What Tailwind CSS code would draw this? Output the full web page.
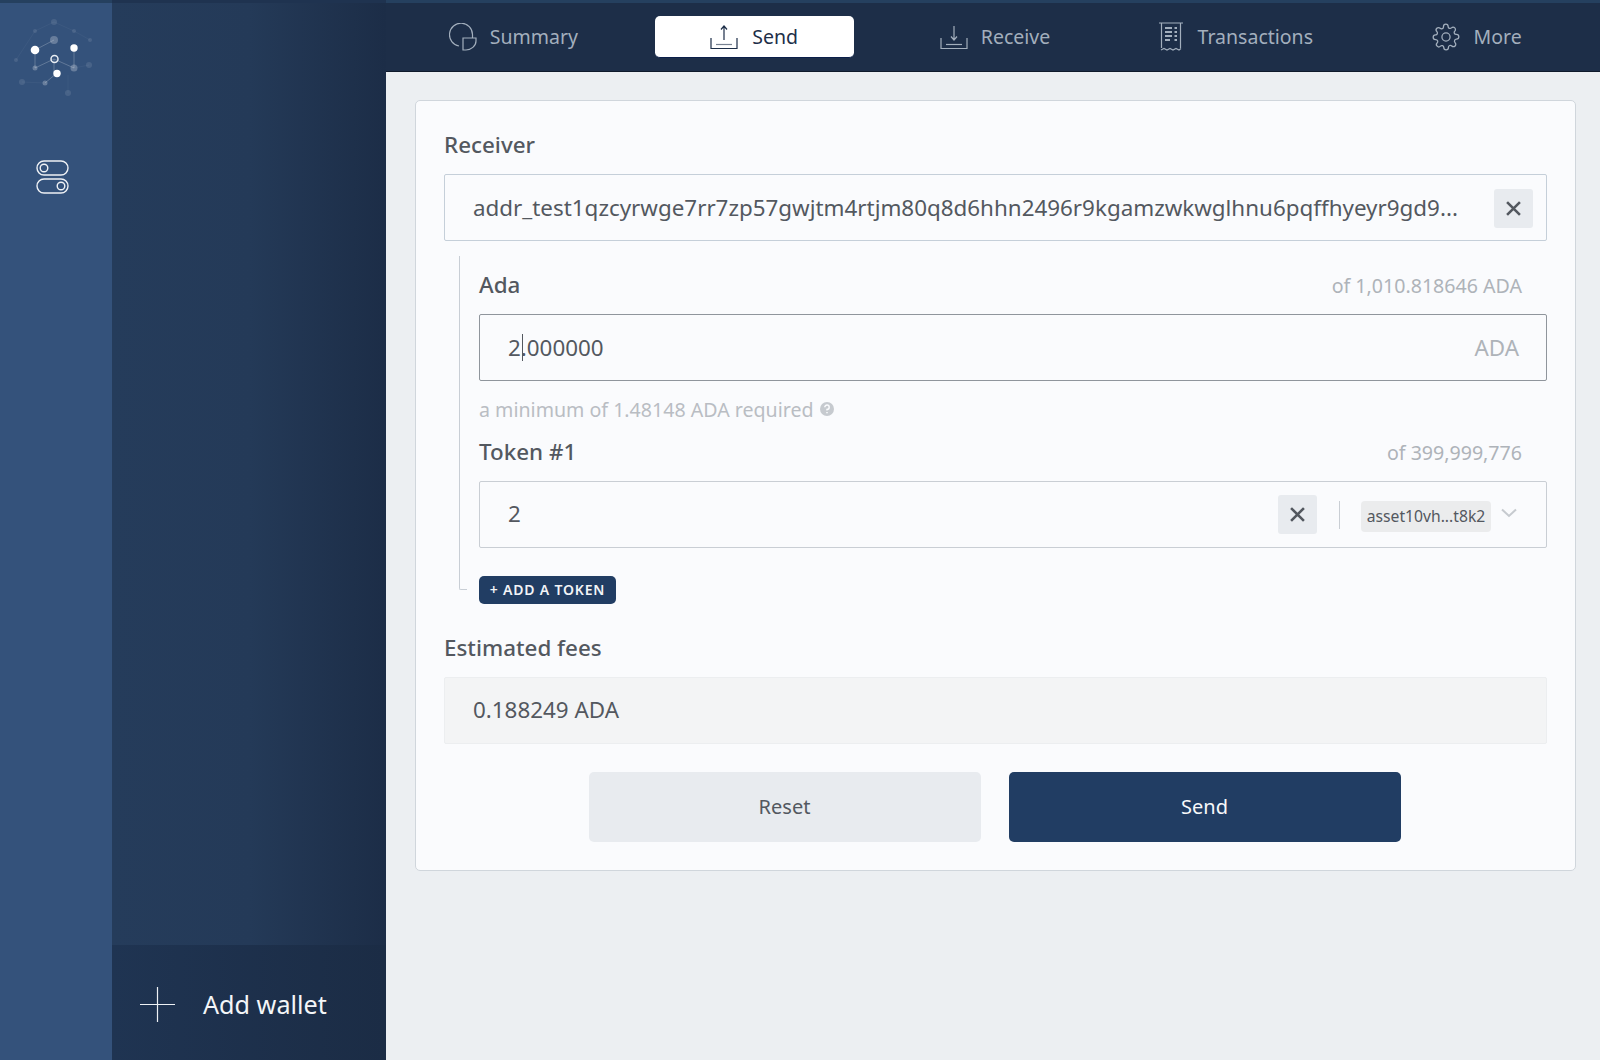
<!DOCTYPE html>
<html lang="en">
<head>
    <meta charset="UTF-8">
    <meta name="viewport" content="width=device-width, initial-scale=1.0">
    <title>Send</title>
    <script src="https://cdn.jsdelivr.net/npm/@tailwindcss/browser@4"></script>
</head>
<body class="h-[1060px] w-[1600px] overflow-hidden bg-[#eceff2] font-['Noto_Sans',sans-serif] text-[#53585f]">
<div class="flex h-full">
    <!-- icon rail -->
    <aside class="flex w-[112px] shrink-0 flex-col items-center border-t-[3px] border-[#25405f] bg-[#34527b]">
        <svg width="112" height="100" viewBox="0 3 112 100">
            <g stroke="#fff" stroke-opacity=".22" fill="none">
                <path d="M35 50L54 40M35 50V68L54 59M74 48V68L54 59M54 59V73M57 73L45 83"/>
                <path stroke-opacity=".04" d="M35 31L54 22L74 31L90 40M22 82L45 83M16 60L35 31M89 65L74 68M68 93V75"/>
            </g>
            <g fill="#fff" fill-opacity=".25">
                <circle cx="54" cy="40" r="4"/><circle cx="35" cy="68" r="2.500"/><circle cx="74" cy="68" r="3.500"/><circle cx="45" cy="83" r="2.500"/>
            </g>
            <g fill="#fff" fill-opacity=".1">
                <circle cx="22" cy="82" r="3"/><circle cx="68" cy="93" r="3"/><circle cx="16" cy="60" r="2"/><circle cx="89" cy="65" r="3"/><circle cx="90" cy="40" r="2"/><circle cx="74" cy="31" r="2"/><circle cx="35" cy="31" r="2"/><circle cx="54" cy="22" r="3"/>
            </g>
            <circle cx="35" cy="50" r="4.300" fill="#fff"/><circle cx="74" cy="48" r="3.700" fill="#fff"/><circle cx="57" cy="73.500" r="3.700" fill="#fff"/>
            <circle cx="54.500" cy="59" r="3.500" fill="none" stroke="#e8edf3" stroke-width="1.500"/>
        </svg>
        <svg class="mt-[57px] -ml-[6px]" width="34" height="34" viewBox="0 0 34 34" fill="none" stroke="#eef1f5" stroke-width="1.400">
            <rect x="1" y="1" width="31" height="14" rx="7"/><circle cx="8" cy="8" r="3.800"/>
            <rect x="1" y="19" width="31" height="14" rx="7"/><circle cx="25" cy="26" r="3.800"/>
        </svg>
    </aside>

    <!-- wallet list -->
    <aside class="flex w-[274px] shrink-0 flex-col justify-end border-t-[3px] border-[#1f3350] bg-gradient-to-r from-[#253c5b] via-[#243a58] to-[#1c2d47]">
        <div class="flex h-[115px] items-center gap-[28px] bg-gradient-to-r from-[#1f3452] to-[#1b2c45] pl-[28px] pt-[4px] text-[25.200px] text-[#f4f6f8]">
            <svg width="35" height="35" viewBox="0 0 35 35" stroke="#eef1f5" stroke-width="1.200"><path d="M0 17.500H35M17.500 0V35"/></svg>
            <span class="leading-none">Add wallet</span>
        </div>
    </aside>

    <!-- main -->
    <main class="flex min-w-0 flex-1 flex-col">
        <nav class="grid h-[72px] shrink-0 grid-cols-5 items-center border-t-[3px] border-b border-t-[#25405f] border-b-[#0f1a2b] bg-[#1d2e48] pl-[7px] pr-[3px] text-[19.500px] text-[#a3afbd]">
            <a class="flex items-center justify-center gap-[13px]">
                <svg width="28" height="28" viewBox="0 0 28 28" fill="none" stroke="currentColor" stroke-width="1.200"><path d="M10 23A11.500 11.500 0 1 1 23.500 11.500V15"/><path d="M14 15H27V18C27 23 22 27 17 27H14Z"/></svg>
                <span>Summary</span>
            </a>
            <div class="px-[21px]">
                <a class="flex h-[42px] items-center justify-center gap-[14px] rounded-[5px] border-b border-[#0b1f4a] bg-white text-[#1d2e48]">
                    <svg width="28" height="26" viewBox="0 0 28 26" fill="none" stroke="currentColor" stroke-width="1.200"><path d="M14 2V16M11 5.500L14 2L17 5.500"/><path d="M1 14V24.500H27V14"/><path d="M6 20.500H22" stroke-opacity=".6"/></svg>
                    <span>Send</span>
                </a>
            </div>
            <a class="flex items-center justify-center gap-[13px]">
                <svg width="28" height="26" viewBox="0 0 28 26" fill="none" stroke="currentColor" stroke-width="1.200"><path d="M14 2V16M11 12.500L14 16L17 12.500"/><path d="M1 14V24.500H27V14"/><path d="M6 20.500H22"/></svg>
                <span>Receive</span>
            </a>
            <a class="flex items-center justify-center gap-[15px]">
                <svg width="24" height="30" viewBox="0 0 24 30" fill="none" stroke="currentColor" stroke-width="1.200"><path d="M0 1H24M2.500 1V26M21.500 1V26M2 28L5 26.500L8 28L11 26.500L14 28L17 26.500L20 28L22 26.500"/><path stroke-width="2" d="M6 6H13M15.500 6H18M6 10H13M15.500 10H18M6 14H13M15.500 14H18M6 18H11M15.500 18H18"/></svg>
                <span>Transactions</span>
            </a>
            <a class="flex items-center justify-center gap-[14px]">
                <svg width="28" height="28" viewBox="0 0 24 24" fill="none" stroke="currentColor" stroke-width="1.100"><circle cx="12" cy="12" r="3.500"/><path d="M19.400 15a1.650 1.650 0 0 0 .330 1.820l.060.060a2 2 0 1 1-2.830 2.830l-.060-.060a1.650 1.650 0 0 0-2.800 1.170V21a2 2 0 0 1-4 0v-.090a1.650 1.650 0 0 0-2.800-1.110l-.060.060a2 2 0 1 1-2.830-2.830l.060-.060a1.650 1.650 0 0 0-1.170-2.800H3a2 2 0 0 1 0-4h.090a1.650 1.650 0 0 0 1.110-2.800l-.060-.060a2 2 0 1 1 2.830-2.830l.060.060a1.650 1.650 0 0 0 2.800-1.170V3a2 2 0 0 1 4 0v.090a1.650 1.650 0 0 0 2.800 1.110l.060-.060a2 2 0 1 1 2.830 2.830l-.060.060a1.650 1.650 0 0 0 1.170 2.800H21a2 2 0 0 1 0 4h-.090a1.650 1.650 0 0 0-1.510 1z"/></svg>
                <span>More</span>
            </a>
        </nav>

        <div class="px-[29px] pt-[28px] pr-[24px]">
            <section class="h-[771px] rounded-[5px] border border-[#d0d6dc] bg-[#fafbfd] px-[28px] pt-[29px]">
                <label class="block text-[22.400px] font-medium leading-[30px]">Receiver</label>
                <div class="mt-[14px] flex h-[67px] items-center justify-between rounded-[2px] border border-[#c5cfd9] pl-[28px] pr-[13px] text-[22.400px]">
                    <span>addr_test1qzcyrwge7rr7zp57gwjtm4rtjm80q8d6hhn2496r9kgamzwkwglhnu6pqffhyeyr9gd9...</span>
                    <span class="mt-[2px] flex size-[39px] items-center justify-center rounded-[3px] bg-[#e8ebef]">
                        <svg width="15" height="15" viewBox="0 0 14 14" stroke="#53585f" stroke-width="2.400"><path d="M1 1L13 13M13 1L1 13"/></svg>
                    </span>
                </div>

                <!-- outputs, with the bracket line on the left -->
                <div class="relative mt-[15px] pl-[35px]">
                    <div class="absolute left-[15px] top-0 h-[334px] w-[8px] rounded-bl-[2px] border-l border-b border-[#c8ced5]"></div>
                    <div class="flex items-baseline justify-between pr-[25px] pt-[14px]">
                        <span class="text-[22.400px] font-medium leading-[30px]">Ada</span>
                        <span class="text-[19.600px] text-[#aeb3b9]">of 1,010.818646 ADA</span>
                    </div>
                    <div class="relative mt-[14px] flex h-[67px] items-center justify-between rounded-[2px] border border-[#8f959c] pl-[28px] pr-[27px] text-[22.400px]">
                        <span>2.000000</span>
                        <span class="absolute left-[42px] top-[19px] h-[27px] w-px bg-[#53585f]"></span>
                        <span class="text-[#aeb3b9]">ADA</span>
                    </div>
                    <div class="mt-[14px] flex h-[28px] items-center gap-[6px] text-[19.600px] text-[#b9bdc3]">
                        <span>a minimum of 1.48148 ADA required</span>
                        <svg width="14" height="14" viewBox="0 0 14 14"><circle cx="7" cy="7" r="7" fill="#c6cacf"/><path d="M4.800 5.300A2.200 2.200 0 1 1 7 7.500V8.500M7 10V11.200" fill="none" stroke="#fafbfd" stroke-width="1.500"/></svg>
                    </div>
                    <div class="mt-[14px] flex items-baseline justify-between pr-[25px]">
                        <span class="text-[22.400px] font-medium leading-[30px]">Token #1</span>
                        <span class="text-[19.600px] text-[#aeb3b9]">of 399,999,776</span>
                    </div>
                    <div class="mt-[13px] flex h-[67px] items-center rounded-[2px] border border-[#c9ced4] pl-[28px] pr-[29px] text-[22.400px]">
                        <span class="flex-1">2</span>
                        <span class="flex size-[39px] items-center justify-center rounded-[3px] bg-[#e8ebef]">
                            <svg width="15" height="15" viewBox="0 0 14 14" stroke="#53585f" stroke-width="2.400"><path d="M1 1L13 13M13 1L1 13"/></svg>
                        </span>
                        <span class="ml-[22px] mt-[2px] h-[28px] w-px bg-[#c9ced4]"></span>
                        <span class="ml-[21px] mt-[4px] flex h-[31px] w-[130px] items-center justify-center rounded-[4px] bg-[#ebeced] text-[15.700px]">asset10vh...t8k2</span>
                        <svg class="ml-[10px] -mt-[3px]" width="16" height="10" viewBox="0 0 16 10" fill="none" stroke="#c6cacf" stroke-width="2"><path d="M1 1.500L8 8L15 1.500"/></svg>
                    </div>
                    <button class="mt-[28px] block h-[28px] w-[137px] rounded-[5px] bg-[#213d63] text-[14px] font-semibold tracking-[.8px] text-[#f2f4f7]">+ ADD A TOKEN</button>
                </div>

                <label class="mt-[29px] block text-[22.400px] font-medium leading-[30px]">Estimated fees</label>
                <div class="mt-[14px] flex h-[67px] items-center rounded-[2px] border border-[#eceef0] bg-[#f3f4f5] pl-[28px] text-[22.400px]">0.188249 ADA</div>

                <div class="mt-[28px] flex justify-center gap-[28px] pr-[2px]">
                    <button class="h-[70px] w-[392px] rounded-[5px] bg-[#e8ebef] text-[20px]">Reset</button>
                    <button class="h-[70px] w-[392px] rounded-[5px] bg-[#213d63] text-[20px] text-[#f7f8fa]">Send</button>
                </div>
            </section>
        </div>
    </main>
</div>
</body>
</html>
